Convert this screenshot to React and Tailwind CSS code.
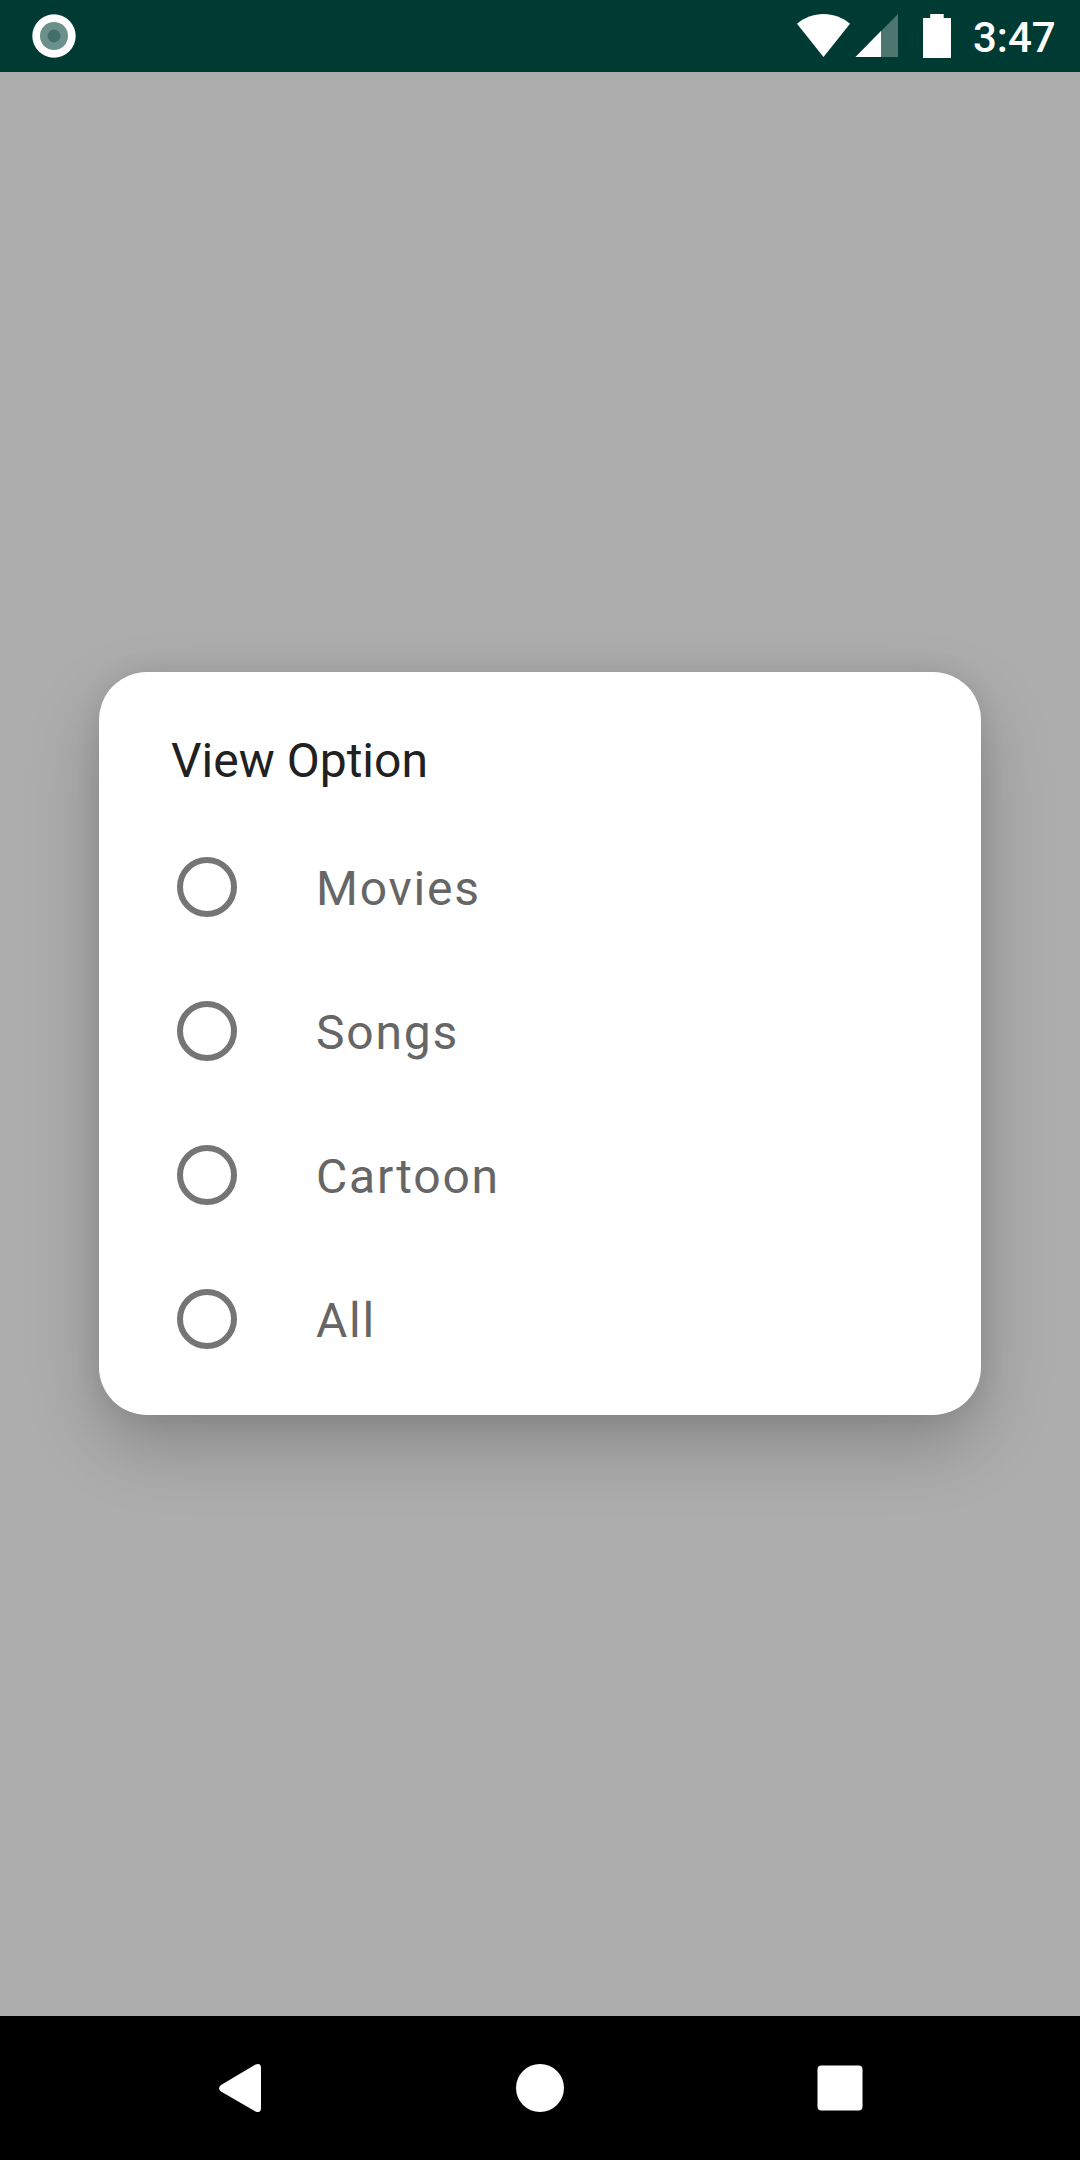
const options = ["Movies", "Songs", "Cartoon", "All"];

function StatusBar() {
  return (
    <header className="flex h-[72px] shrink-0 items-start bg-[#003b33] text-white">
      <svg className="ml-[30px] mt-3 size-12" viewBox="0 0 48 48">
        <circle cx="24" cy="24" r="21.7" fill="#fff" />
        <circle cx="24" cy="24" r="14" fill="#6c918b" />
        <circle cx="24" cy="24" r="6.5" fill="#426f67" />
      </svg>
      <svg className="ml-auto h-[72px] w-[54px]" viewBox="0 0 54 72" fill="#fff">
        <path d="M0 23.800C7.500 17.500 16.500 14 26.500 14s19 3.500 26.500 9.800L26.500 57Z" />
      </svg>
      <svg className="ml-1 h-[72px] w-11" viewBox="0 0 44 72">
        <path d="M0.500 57 43 14V57Z" fill="#fff" opacity="0.3" />
        <path d="M0.500 57 26 31V57Z" fill="#fff" />
      </svg>
      <svg className="ml-6 h-[72px] w-7" viewBox="0 0 28 72" fill="#fff">
        <path d="M7.200 14H20.700V18H28V58H0V18H7.200Z" />
      </svg>
      <span className="ml-[22px] mr-[23px] w-[84px] whitespace-nowrap text-[42px] font-medium leading-[75px]">3:47</span>
    </header>
  );
}

function Option({ label }) {
  return (
    <label className="flex h-36 items-center">
      <input type="radio" name="view" className="ml-[78px] size-[60px] shrink-0 appearance-none rounded-full border-[6px] border-[#757575]" />
      <span className="ml-[79px] mt-1 text-[48px] leading-[56px] tracking-[1.8px] text-[#666666]">{label}</span>
    </label>
  );
}

export default function App() {
  return (
    <div className="flex h-[2160px] w-[1080px] flex-col overflow-hidden bg-[#adadad] font-['Roboto',sans-serif]">
      <StatusBar />
      <main className="flex flex-1 flex-col items-center pt-[600px]">
        <section className="h-[743px] w-[882px] rounded-[48px] bg-white shadow-[0_30px_70px_rgba(0,0,0,0.22),0_0_26px_rgba(0,0,0,0.08)]">
          <h1 className="h-[143px] pl-[72px] pt-[61px] text-[48px] leading-[56px] text-[#212121]">View Option</h1>
          {options.map((label) => (
            <Option key={label} label={label} />
          ))}
        </section>
      </main>
      <nav className="flex h-36 shrink-0 items-center bg-black">
        <svg className="ml-[216px] size-12" viewBox="0 0 48 48" fill="#fff">
          <path d="M39.500 0.600Q45 -1.500 45 4V44Q45 49.500 39.500 47.400L5 27.500Q1 24.500 5 21Z" />
        </svg>
        <div className="ml-[252px] size-12 rounded-full bg-white" />
        <svg className="ml-[252px] size-12" viewBox="0 0 48 48" fill="#fff">
          <rect x="1.500" y="1.500" width="45" height="45" rx="4" />
        </svg>
      </nav>
    </div>
  );
}
